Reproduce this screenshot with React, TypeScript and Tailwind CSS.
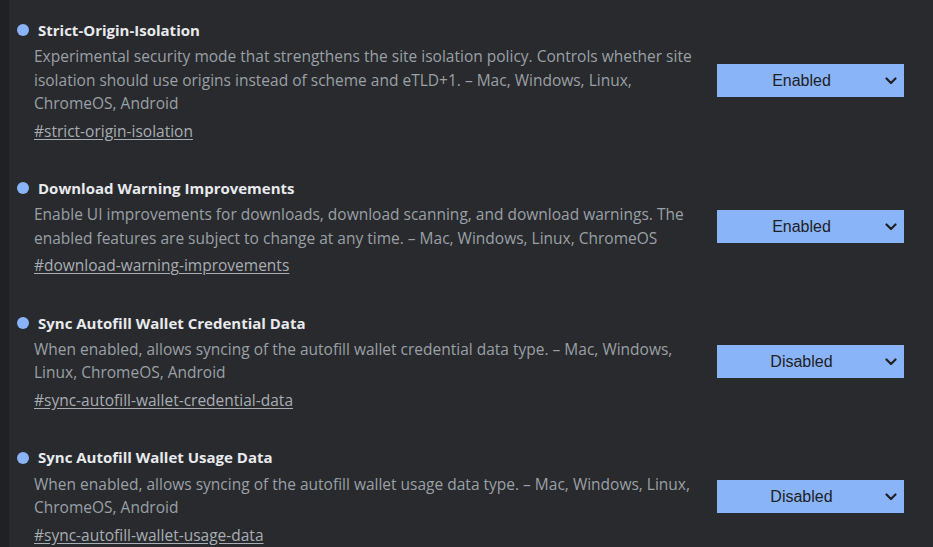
import React from "react";

type Flag = {
  title: string;
  desc: string;
  link: string;
  value: "Enabled" | "Disabled";
};

const flags: Flag[] = [
  {
    title: "Strict-Origin-Isolation",
    desc: "Experimental security mode that strengthens the site isolation policy. Controls whether site isolation should use origins instead of scheme and eTLD+1. – Mac, Windows, Linux, ChromeOS, Android",
    link: "#strict-origin-isolation",
    value: "Enabled",
  },
  {
    title: "Download Warning Improvements",
    desc: "Enable UI improvements for downloads, download scanning, and download warnings. The enabled features are subject to change at any time. – Mac, Windows, Linux, ChromeOS",
    link: "#download-warning-improvements",
    value: "Enabled",
  },
  {
    title: "Sync Autofill Wallet Credential Data",
    desc: "When enabled, allows syncing of the autofill wallet credential data type. – Mac, Windows, Linux, ChromeOS, Android",
    link: "#sync-autofill-wallet-credential-data",
    value: "Disabled",
  },
  {
    title: "Sync Autofill Wallet Usage Data",
    desc: "When enabled, allows syncing of the autofill wallet usage data type. – Mac, Windows, Linux, ChromeOS, Android",
    link: "#sync-autofill-wallet-usage-data",
    value: "Disabled",
  },
];

const Chevron = () => (
  <svg width="12" height="8" viewBox="0 0 12 8" fill="none" aria-hidden="true">
    <path d="M1.5 1.5 6 6l4.5-4.5" stroke="#202124" strokeWidth="2.2" strokeLinecap="round" strokeLinejoin="round" />
  </svg>
);

const FlagRow: React.FC<{ flag: Flag }> = ({ flag }) => (
  <div className="flex items-center gap-4">
    <div className="flex-1 min-w-0">
      <div className="flex items-center h-6 text-[15px] font-bold text-[#e8eaed]">
        <span className="ml-[-17px] mr-[9px] h-3 w-3 shrink-0 rounded-full bg-[#8ab4f8]" />
        {flag.title}
      </div>
      <p className="mt-[3px] max-w-[660px] text-[15.5px] leading-[23.5px] text-[#9aa0a6]">{flag.desc}</p>
      <a href={flag.link} className="mt-[3px] block h-6 leading-6 text-[15.5px] text-[#a8adb3] underline underline-offset-2">
        {flag.link}
      </a>
    </div>
    <div className="relative flex h-[33px] w-[187px] shrink-0 items-center bg-[#8ab4f8] font-['Liberation_Sans',Arial,sans-serif] text-[16px] text-[#202124]">
      <span className="flex-1 pr-[18px] pt-px text-center">{flag.value}</span>
      <span className="absolute right-[7px] top-[13px]">
        <Chevron />
      </span>
    </div>
  </div>
);

export default function App() {
  return (
    <div className="flex h-[547px] w-full overflow-hidden bg-[#292a2d] font-['Open_Sans','Noto_Sans',sans-serif]">
      <div className="w-[9px] shrink-0 bg-[#202124]" />
      <div className="flex flex-1 flex-col gap-[33.7px] pl-[25px] pr-[29px] pt-[18px]">
        {flags.map((f) => (
          <FlagRow key={f.title} flag={f} />
        ))}
      </div>
    </div>
  );
}
